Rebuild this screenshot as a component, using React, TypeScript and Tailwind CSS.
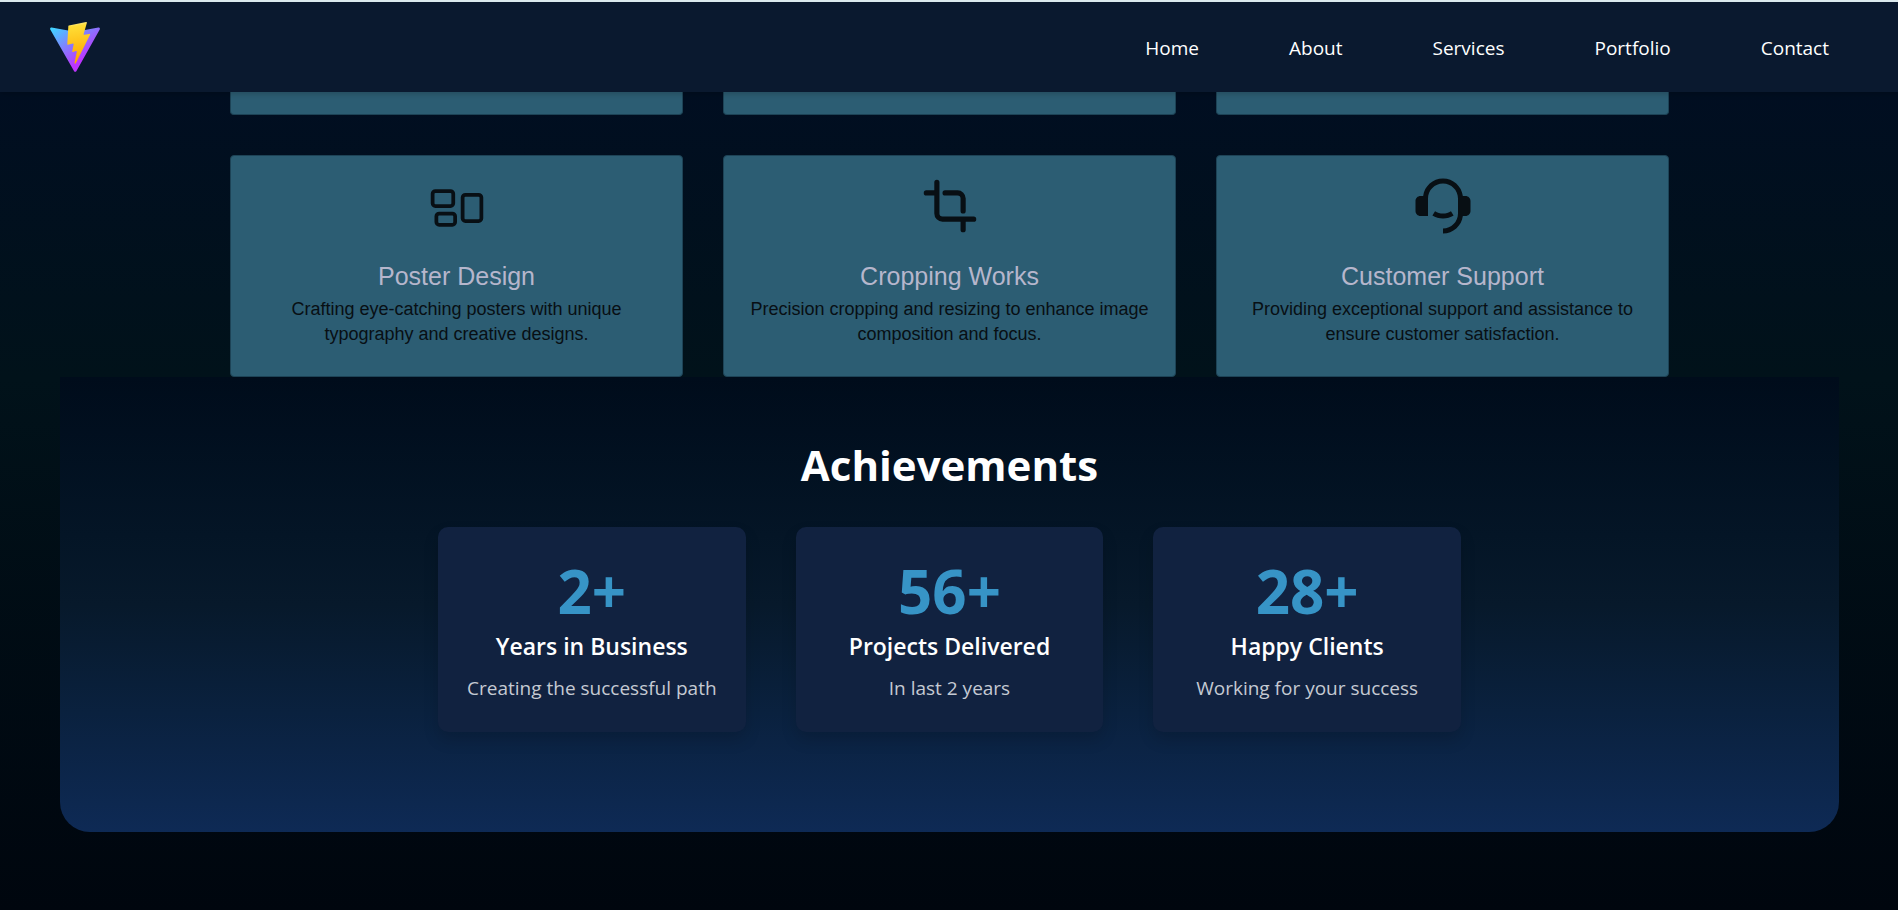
import type { ReactNode } from "react";
import { HiOutlineRectangleGroup } from "react-icons/hi2";
import { IoCrop } from "react-icons/io5";
import { RiCustomerService2Fill } from "react-icons/ri";

const links = ["Home", "About", "Services", "Portfolio", "Contact"];

const services: { icon: ReactNode; title: string; text: string }[] = [
  {
    icon: <HiOutlineRectangleGroup size={60} />,
    title: "Poster Design",
    text: "Crafting eye-catching posters with unique typography and creative designs.",
  },
  {
    icon: <IoCrop size={60} />,
    title: "Cropping Works",
    text: "Precision cropping and resizing to enhance image composition and focus.",
  },
  {
    icon: <RiCustomerService2Fill size={60} />,
    title: "Customer Support",
    text: "Providing exceptional support and assistance to ensure customer satisfaction.",
  },
];

const stats = [
  { value: "2+", label: "Years in Business", note: "Creating the successful path" },
  { value: "56+", label: "Projects Delivered", note: "In last 2 years" },
  { value: "28+", label: "Happy Clients", note: "Working for your success" },
];

function Logo() {
  return (
    <svg width="50" height="50" viewBox="0 0 256 257" aria-hidden="true">
      <defs>
        <linearGradient id="logoBody" x1="-.828%" x2="57.636%" y1="7.652%" y2="78.411%">
          <stop offset="0%" stopColor="#41D1FF" />
          <stop offset="100%" stopColor="#BD34FE" />
        </linearGradient>
        <linearGradient id="logoBolt" x1="43.376%" x2="50.316%" y1="2.242%" y2="89.03%">
          <stop offset="0%" stopColor="#FFEA83" />
          <stop offset="8.333%" stopColor="#FFDD35" />
          <stop offset="100%" stopColor="#FFA800" />
        </linearGradient>
      </defs>
      <path
        fill="url(#logoBody)"
        d="M255.153 37.938L134.897 252.976c-2.483 4.44-8.862 4.466-11.382.048L.875 37.958c-2.746-4.814 1.371-10.646 6.827-9.67l120.385 21.517a6.537 6.537 0 0 0 2.322-.004l117.867-21.483c5.438-.991 9.574 4.796 6.877 9.62Z"
      />
      <path
        fill="url(#logoBolt)"
        d="M185.432.063L96.44 17.501a3.268 3.268 0 0 0-2.634 3.014l-5.474 92.456a3.268 3.268 0 0 0 3.997 3.378l24.777-5.718c2.318-.535 4.413 1.507 3.936 3.838l-7.361 36.047c-.495 2.426 1.782 4.5 4.151 3.78l15.304-4.649c2.372-.72 4.652 1.36 4.15 3.788l-11.698 56.621c-.732 3.542 3.979 5.473 5.943 2.437l1.313-2.028l72.516-144.72c1.215-2.423-.88-5.186-3.54-4.672l-25.505 4.922c-2.396.462-4.435-1.77-3.759-4.114l16.646-57.705c.677-2.35-1.37-4.583-3.769-4.113Z"
      />
    </svg>
  );
}

export default function App() {
  return (
    <div className="flex min-h-screen flex-col bg-[#010e20] font-['Open_Sans','Noto_Sans',sans-serif]">
      <header className="sticky top-0 z-10 flex items-center justify-between border-t-2 border-[#dbe9ee] bg-[#0a192f] py-5 pr-[69px] pl-[50px] shadow-[0_2px_6px_rgba(0,0,0,0.2)]">
        <a href="#home" aria-label="Home page">
          <Logo />
        </a>
        <nav className="flex gap-[90px] pt-[2px] text-[19px] leading-[26px] text-white">
          {links.map((link) => (
            <a key={link} href={`#${link.toLowerCase()}`}>
              {link}
            </a>
          ))}
        </nav>
      </header>

      <main className="flex-1 bg-linear-to-b from-[#010e21] via-[#01121a] via-35% to-[#00060e] pr-[59px] pb-[78px] pl-[60px]">
        <section
          id="services"
          className="mx-auto max-w-[1439px] text-center font-['Liberation_Sans',Arial,sans-serif]"
        >
          <div className="mb-10 grid grid-cols-3 gap-10" aria-hidden="true">
            {services.map((s) => (
              <div
                key={s.title}
                className="h-[23px] rounded-b-[4px] border border-t-0 border-[#1d4356] bg-[#2c5d73]"
              />
            ))}
          </div>
          <div className="grid grid-cols-3 gap-10">
            {services.map((s) => (
              <article
                key={s.title}
                className="flex flex-col items-center rounded-[4px] border border-[#1d4356] bg-[#2c5d73] px-5 pt-5 pb-[29px] text-[#080f14]"
              >
                {s.icon}
                <h3 className="mt-6 text-[25px] leading-8 text-[#b6b6cc]">{s.title}</h3>
                <p className="mt-[5px] text-[18px] leading-[25px]">{s.text}</p>
              </article>
            ))}
          </div>
        </section>

        <section className="rounded-b-[30px] bg-linear-to-b from-[#000c1b] via-[#07192b] to-[#0e2a55] px-5 pt-[60px] pb-[100px] text-center">
          <h2 className="text-[42px] leading-[56px] font-bold text-white">Achievements</h2>
          <div className="mx-auto mt-[34px] grid max-w-[1023px] grid-cols-3 gap-[50px]">
            {stats.map((s) => (
              <article
                key={s.label}
                className="rounded-[10px] bg-[#112240] px-5 pt-[29px] pb-[30px] shadow-[0_8px_16px_rgba(0,0,0,0.14)]"
              >
                <p className="text-[60px] leading-[70px] font-bold text-[#3794c6]">{s.value}</p>
                <h3 className="mt-[2px] text-[23px] leading-[36px] font-semibold text-white">{s.label}</h3>
                <p className="mt-[10px] text-[19px] leading-[28px] text-[#c5cad3]">{s.note}</p>
              </article>
            ))}
          </div>
        </section>
      </main>
    </div>
  );
}
